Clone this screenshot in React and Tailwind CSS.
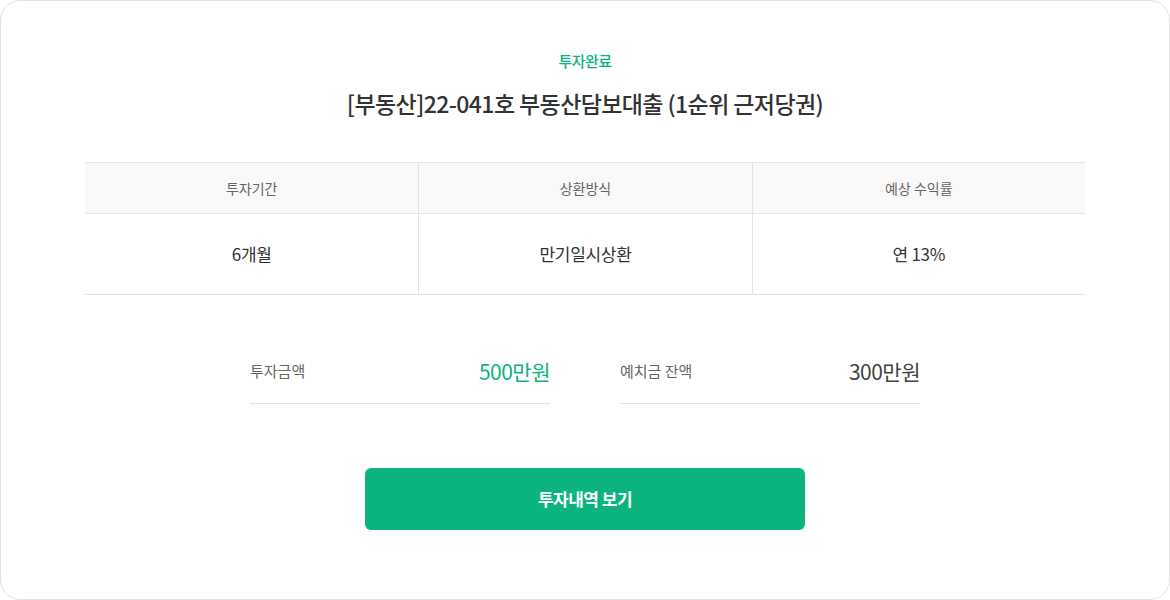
import React from "react";

const terms = [
	{ label: "투자기간", value: "6개월" },
	{ label: "상환방식", value: "만기일시상환" },
	{ label: "예상 수익률", value: "연 13%" },
];

function App() {
	return (
		<div
			className="w-[1170px] h-[600px] bg-white"
			style={{ fontFamily: '"Noto Sans CJK KR", "Noto Sans", sans-serif' }}
		>
			<div className="h-full border border-[#e2e2e2] rounded-[20px] flex flex-col items-center pt-[49px]">
				<div className="text-[15px] leading-[22px] font-medium text-[#0bb47f] tracking-[-0.5px]">
					투자완료
				</div>
				<h1 className="mt-[15px] text-[23px] leading-[32px] font-medium text-[#333] tracking-[-0.6px]">
					[부동산]22-041호 부동산담보대출 (1순위 근저당권)
				</h1>

				<div className="mt-[43px] w-[1000px] grid grid-cols-3 border-t border-b border-[#e4e4e4]">
					{terms.map((t, i) => (
						<div
							key={t.label}
							className={`flex flex-col ${i > 0 ? "border-l border-[#e4e4e4]" : ""}`}
						>
							<div className="h-[51px] bg-[#f9f9f9] border-b border-[#e4e4e4] flex items-center justify-center text-[14px] text-[#666]">
								{t.label}
							</div>
							<div className="h-[80px] flex items-center justify-center text-[17px] text-[#333] tracking-[-0.3px]">
								{t.value}
							</div>
						</div>
					))}
				</div>

				<div className="mt-[46px] flex gap-[70px]">
					<div className="w-[300px] h-[63px] border-b border-[#e4e4e4] flex items-center justify-between pb-[1px]">
						<span className="text-[15px] text-[#666]">투자금액</span>
						<span className="text-[21px] text-[#0bb47f] tracking-[-0.5px]">500만원</span>
					</div>
					<div className="w-[300px] h-[63px] border-b border-[#e4e4e4] flex items-center justify-between pb-[1px]">
						<span className="text-[15px] text-[#666]">예치금 잔액</span>
						<span className="text-[21px] text-[#444] tracking-[-0.5px]">300만원</span>
					</div>
				</div>

				<button className="mt-[64px] w-[440px] h-[62px] rounded-[6px] bg-[#0bb47f] text-white text-[17px] font-bold tracking-[-0.5px] flex items-center justify-center">
					투자내역 보기
				</button>
			</div>
		</div>
	);
}

export default App;
